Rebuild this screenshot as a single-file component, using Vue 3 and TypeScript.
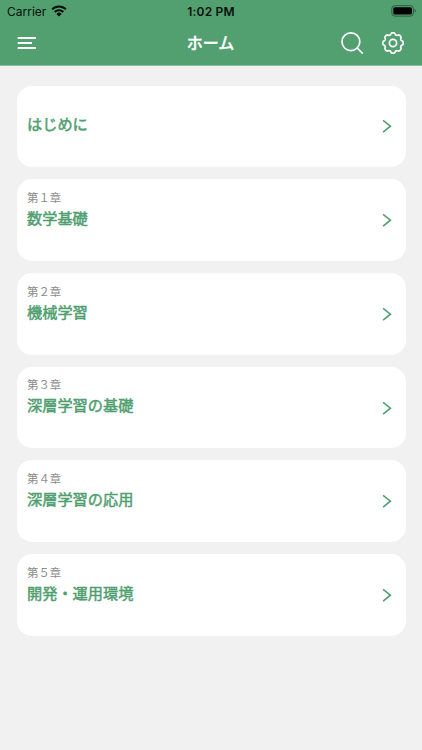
<script setup lang="ts">
interface Chapter {
  label: string
  title: string
}

const chapters: Chapter[] = [
  { label: '', title: 'はじめに' },
  { label: '第１章', title: '数学基礎' },
  { label: '第２章', title: '機械学習' },
  { label: '第３章', title: '深層学習の基礎' },
  { label: '第４章', title: '深層学習の応用' },
  { label: '第５章', title: '開発・運用環境' },
]

// Outline of an eight-toothed gear with soft, flattened teeth.
function gearOutline(cx: number, cy: number): string {
  const steps = 128
  const points: string[] = []
  for (let i = 0; i < steps; i++) {
    const a = (i / steps) * Math.PI * 2
    const r = 9.3 + 0.85 * Math.tanh(2 * Math.cos(8 * a) + 0.5)
    points.push(`${(cx + r * Math.cos(a)).toFixed(2)} ${(cy + r * Math.sin(a)).toFixed(2)}`)
  }
  return `M${points.join('L')}Z`
}

const gear = gearOutline(12, 12)
</script>

<template>
  <div class="screen">
    <header class="header">
      <div class="status">
        <div class="status-left">
          <span class="carrier">Carrier</span>
          <svg class="wifi" width="16" height="12" viewBox="0 0 16 12">
            <path d="M1.1 4.3a9.8 9.8 0 0 1 13.8 0M3.7 7a6.1 6.1 0 0 1 8.6 0" fill="none" stroke="#07100b" stroke-width="2.1" />
            <path d="M8 11.5 5.4 8.9a3.7 3.7 0 0 1 5.2 0Z" fill="#07100b" />
          </svg>
        </div>
        <span class="time">1:02 PM</span>
        <div class="status-right">
          <svg width="26" height="12" viewBox="0 0 26 12">
            <rect x="0.8" y="0.7" width="21.6" height="10.4" rx="3" fill="none" stroke="#2b5c40" stroke-width="1" />
            <rect x="2.3" y="2.2" width="18.6" height="7.4" rx="1.6" fill="#000" />
            <path d="M23.7 4.1v3.6c1.6-.7 1.6-2.9 0-3.6Z" fill="#2b5c40" />
          </svg>
        </div>
      </div>
      <nav class="nav">
        <svg width="20" height="14" viewBox="0 0 20 14">
          <path d="M1.7 2h18.2M1.7 7h14.3M1.7 12.1h18.2" fill="none" stroke="#fff" stroke-width="2" />
        </svg>
        <h1 class="title">ホーム</h1>
        <div class="actions">
          <svg width="24" height="24" viewBox="0 0 24 24" fill="none" stroke="#fff" stroke-width="1.7" stroke-linecap="round">
            <circle cx="10.9" cy="10.7" r="8.9" />
            <path d="m17.2 17 5.1 5.1" />
          </svg>
          <svg width="24" height="24" viewBox="0 0 24 24" fill="none" stroke="#fff" stroke-width="1.7" stroke-linejoin="round">
            <path :d="gear" />
            <circle cx="12" cy="12" r="3.6" />
          </svg>
        </div>
      </nav>
    </header>
    <main class="list">
      <article v-for="chapter in chapters" :key="chapter.title" class="card">
        <div class="text">
          <p class="label">{{ chapter.label }}</p>
          <h2 class="name">{{ chapter.title }}</h2>
        </div>
        <svg class="chevron" width="10" height="14" viewBox="0 0 10 14">
          <path d="m1.1 1.3 7.3 5.9-7.3 5.9" fill="none" stroke="#509f71" stroke-width="1.6" />
        </svg>
      </article>
    </main>
  </div>
</template>

<style>
body {
  margin: 0;
  background: #f1f1f1;
}
</style>

<style scoped>
.screen {
  min-height: 750px;
  background: #f1f1f1;
  font-family: Inter, "Noto Sans CJK JP", sans-serif;
}
.header {
  box-sizing: border-box;
  height: 66px;
  background: #529f70;
  border-bottom: 1px solid #8dbd9f;
}
.status {
  display: grid;
  grid-template-columns: 1fr auto 1fr;
  align-items: center;
  height: 22px;
  padding: 0 7px;
  color: #07100b;
  font-size: 12px;
}
.status-left {
  display: flex;
  align-items: center;
  gap: 5px;
}
.time {
  font-weight: 600;
  letter-spacing: 0.2px;
}
.status-right {
  display: flex;
  justify-content: flex-end;
  margin-right: -2px;
}
.nav {
  display: grid;
  grid-template-columns: 1fr auto 1fr;
  align-items: center;
  height: 42px;
  padding: 0 17px 0 16px;
}
.title {
  margin: 0;
  color: #fff;
  font-size: 16px;
  font-weight: 400;
  line-height: 24px;
  -webkit-text-stroke: 0.6px #fff;
}
.actions {
  display: flex;
  justify-content: flex-end;
  gap: 17px;
}
.list {
  display: flex;
  flex-direction: column;
  gap: 12.2px;
  padding: 19.7px 16.5px 0;
}
.card {
  box-sizing: border-box;
  display: flex;
  justify-content: space-between;
  align-items: center;
  height: 81.5px;
  padding: 0 13.5px 0 10.5px;
  border-radius: 15px;
  background: #fff;
}
.text {
  align-self: flex-start;
  padding-top: 10.6px;
}
.label {
  height: 16px;
  margin: 0;
  color: #8c8c8c;
  font-size: 11.4px;
  font-weight: 400;
  line-height: 16px;
}
.name {
  margin: 2px 0 0;
  color: #509f71;
  font-size: 15.2px;
  font-weight: 400;
  line-height: 22px;
  -webkit-text-stroke: 0.5px #509f71;
}
</style>
